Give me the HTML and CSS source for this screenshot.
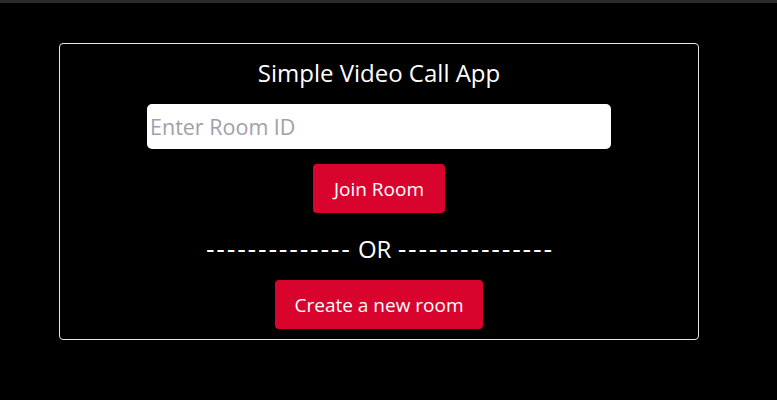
FILE: index.html
```html
<!DOCTYPE html>
<html lang="en">
<head>
<meta charset="utf-8">
<title>Simple Video Call App</title>
<link rel="stylesheet" href="styles.css">
</head>
<body>
<div class="topbar"></div>
<main class="page">
  <section class="card">
    <h1 class="title">Simple Video Call App</h1>
    <input class="room-input" type="text" placeholder="Enter Room ID">
    <button class="btn btn-join">Join Room</button>
    <div class="divider"><span class="dashes">--------------</span> OR <span class="dashes">---------------</span></div>
    <button class="btn btn-create">Create a new room</button>
  </section>
</main>
</body>
</html>
```

FILE: styles.css
```css
* { box-sizing: border-box; }
html, body {
  margin: 0;
  padding: 0;
  background: #000;
  height: 100%;
}
body {
  font-family: "Open Sans", "Noto Sans", sans-serif;
  color: #fff;
}
.topbar {
  height: 3px;
  background: #2b2b2e;
}
.page {
  padding: 40px 78px 0 59px;
}
.card {
  border: 1px solid #e6e6e6;
  border-radius: 4px;
  display: flex;
  flex-direction: column;
  align-items: center;
  padding: 14px 0 10px;
}
.title {
  margin: 0;
  font-weight: 400;
  font-size: 24px;
  line-height: 30px;
  height: 30px;
}
.room-input {
  margin-top: 16px;
  width: 464px;
  height: 45px;
  border: none;
  border-radius: 5px;
  background: #fff;
  padding: 0 3px;
  font-family: inherit;
  font-size: 21.5px;
  color: #222;
  outline: none;
}
.room-input::placeholder { color: #9ea1ab; }
.btn {
  margin-top: 15px;
  height: 49px;
  border: none;
  border-radius: 4px;
  background: #d9042e;
  color: #fff;
  font-family: inherit;
  font-size: 19px;
  cursor: pointer;
}
.btn-join { width: 132px; }
.btn-create { width: 208px; margin-top: 16px; }
.divider {
  margin-top: 21px;
  font-size: 24px;
  line-height: 30px;
  height: 30px;
  white-space: pre;
}
.dashes {
  font-family: "DejaVu Sans", sans-serif;
  letter-spacing: 1.75px;
}
.dashes:first-child {
  margin-left: 1.75px;
}
```
